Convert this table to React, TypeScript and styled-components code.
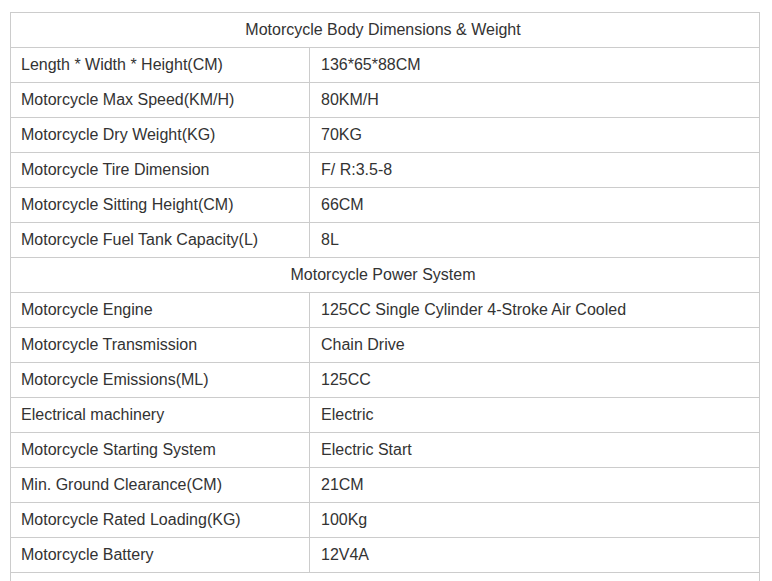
import React from "react";
import styled, { createGlobalStyle } from "styled-components";

const Global = createGlobalStyle`
  html, body { margin: 0; padding: 0; background: #ffffff; }
  body { font-family: "Liberation Sans", Arial, sans-serif; }
`;

const Page = styled.div`
  padding: 12px 0 0 10px;
`;

const Table = styled.table`
  width: 750px;
  border-collapse: collapse;
  table-layout: fixed;
  font-family: "Liberation Sans", Arial, sans-serif;
  font-size: 16px;
  color: #333333;
`;

const Row = styled.tr`
  height: 35px;
`;

const Cell = styled.td<{ $head?: boolean; $value?: boolean }>`
  border: 1px solid #cccccc;
  padding: ${(p) => (p.$head ? "0 14px 0 10px" : p.$value ? "0 10px 0 11px" : "0 10px")};
  height: 34px;
  box-sizing: border-box;
  text-align: ${(p) => (p.$head ? "center" : "left")};
  vertical-align: middle;
  white-space: nowrap;
`;

type Item = { h: string } | { k: string; v: string } | { empty: true };

const items: Item[] = [
  { h: "Motorcycle Body Dimensions & Weight" },
  { k: "Length * Width * Height(CM)", v: "136*65*88CM" },
  { k: "Motorcycle Max Speed(KM/H)", v: "80KM/H" },
  { k: "Motorcycle Dry Weight(KG)", v: "70KG" },
  { k: "Motorcycle Tire Dimension", v: "F/ R:3.5-8" },
  { k: "Motorcycle Sitting Height(CM)", v: "66CM" },
  { k: "Motorcycle Fuel Tank Capacity(L)", v: "8L" },
  { h: "Motorcycle Power System" },
  { k: "Motorcycle Engine", v: "125CC Single Cylinder 4-Stroke Air Cooled" },
  { k: "Motorcycle Transmission", v: "Chain Drive" },
  { k: "Motorcycle Emissions(ML)", v: "125CC" },
  { k: "Electrical machinery", v: "Electric" },
  { k: "Motorcycle Starting System", v: "Electric Start" },
  { k: "Min. Ground Clearance(CM)", v: "21CM" },
  { k: "Motorcycle Rated Loading(KG)", v: "100Kg" },
  { k: "Motorcycle Battery", v: "12V4A" },
  { empty: true },
];

export default function App() {
  return (
    <>
      <Global />
      <Page>
        <Table>
          <colgroup>
            <col style={{ width: 299 }} />
            <col />
          </colgroup>
          <tbody>
            {items.map((it, i) =>
              "h" in it ? (
                <Row key={i}>
                  <Cell $head colSpan={2}>{it.h}</Cell>
                </Row>
              ) : "k" in it ? (
                <Row key={i}>
                  <Cell>{it.k}</Cell>
                  <Cell $value>{it.v}</Cell>
                </Row>
              ) : (
                <Row key={i}>
                  <Cell colSpan={2}>&nbsp;</Cell>
                </Row>
              )
            )}
          </tbody>
        </Table>
      </Page>
    </>
  );
}
